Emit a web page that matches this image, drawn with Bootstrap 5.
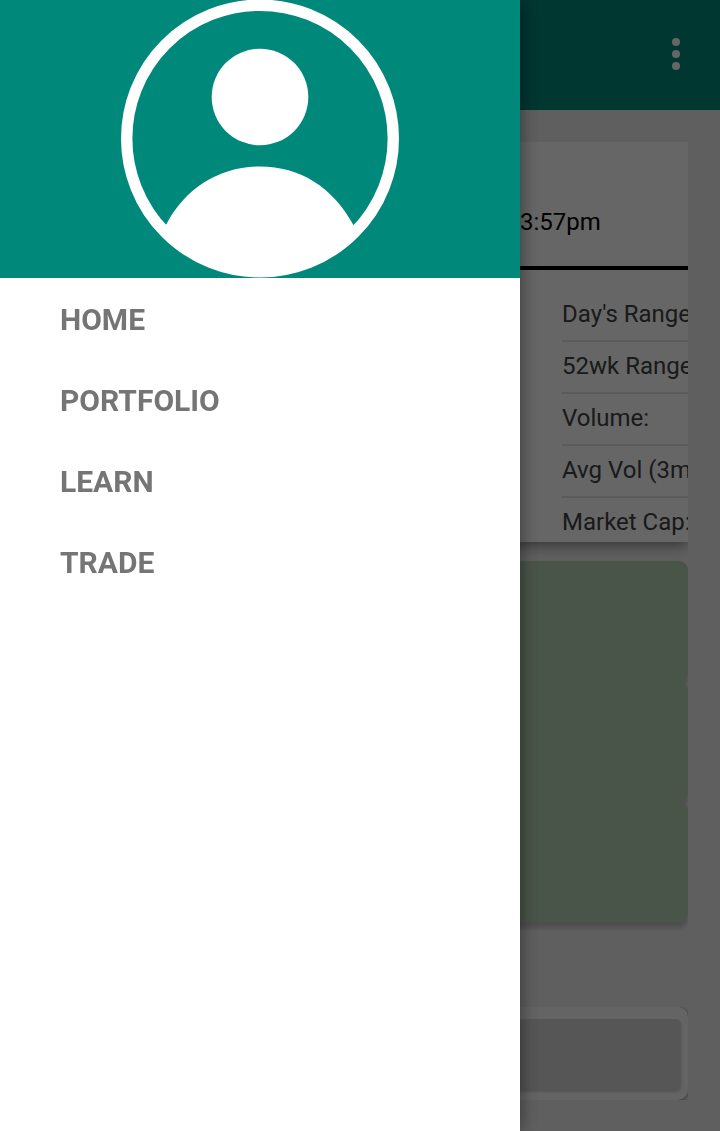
<!DOCTYPE html>
<html lang="en">
<head>
<meta charset="utf-8">
<meta name="viewport" content="width=device-width, initial-scale=1">
<title>Menu</title>
<link href="https://cdn.jsdelivr.net/npm/bootstrap@5.3.0/dist/css/bootstrap.min.css" rel="stylesheet">
<style>
  body { font-family: Roboto, sans-serif; background: #eee; height: 1131px; overflow: hidden; }
  .app-bar { height: 110px; background: #00897b; padding-right: 40px; }
  .page-body { padding: 32px 32px 0; }
  .quote-panel { height: 400px; background: #fff; }
  .quote-head { height: 128px; border-bottom: 4px solid #000; padding: 60px 0 0 488px; font-size: 24px; line-height: 40px; color: #000; }
  .quote-rows { margin: 20px 0 0 530px; }
  .quote-rows li { height: 52px; border-bottom: 2px solid #e0e0e0; font-size: 24px; line-height: 48px; color: #424242; white-space: nowrap; }
  .shade-clip { overflow: hidden; }
  .quote-clip { height: 419px; }
  .quote-panel { box-shadow: 0 5px 12px -1px rgba(0,0,0,.42); }
  .tile-clip { height: 376px; }
  .tile { height: 121px; border-radius: 9px; background: #b9d4b7; box-shadow: 0 6px 4px rgba(0,0,0,.18); }
  .tile + .tile { margin-top: -1px; }
  .entry-box { height: 93px; margin-top: 70px; }
  .entry-frame { height: 93px; border-radius: 10px; background: #fafafa; padding: 12px 7px 9px; box-shadow: 0 1px 4px rgba(0,0,0,.5); }
  .entry-field { height: 70px; border-radius: 5px; background: #d6d6d6; box-shadow: 0 3px 3px rgba(0,0,0,.16); }
  .offcanvas-backdrop.show { opacity: .6; }
  .offcanvas.drawer { --bs-offcanvas-width: 520px; --bs-offcanvas-border-width: 0; background: #fff; box-shadow: 0 0 18px rgba(0,0,0,.5); }
  .drawer-head { height: 278px; background: #00897b; }
  .drawer-menu { padding-top: 1px; }
  .drawer-menu .nav-link { height: 81px; padding: 0 60px; font-size: 30px; font-weight: 700; line-height: 81px; color: #757575; }
</style>
</head>
<body>
<header class="app-bar d-flex align-items-center justify-content-end">
  <svg width="8" height="32" viewBox="0 0 8 32" fill="#fff" overflow="visible"><circle cx="4" cy="3" r="4"/><circle cx="4" cy="15" r="4"/><circle cx="4" cy="27" r="4"/></svg>
</header>
<main class="page-body">
  <section class="shade-clip quote-clip">
    <div class="quote-panel">
      <div class="shade-clip h-100">
        <div class="quote-head">3:57pm</div>
        <ul class="quote-rows list-unstyled">
          <li>Day's Range:</li>
          <li>52wk Range:</li>
          <li>Volume:</li>
          <li>Avg Vol (3m):</li>
          <li>Market Cap:</li>
        </ul>
      </div>
    </div>
  </section>
  <section class="shade-clip tile-clip">
    <div class="tile"></div>
    <div class="tile"></div>
    <div class="tile"></div>
  </section>
  <section class="shade-clip entry-box">
    <div class="entry-frame"><div class="entry-field"></div></div>
  </section>
</main>
<div class="offcanvas-backdrop show"></div>
<aside class="offcanvas offcanvas-start show drawer" data-bs-backdrop="false">
  <div class="drawer-head d-flex justify-content-center">
    <svg width="278" height="278" viewBox="0 0 278 278">
      <clipPath id="disc"><circle cx="139" cy="138.500" r="138"/></clipPath>
      <circle cx="139" cy="138.500" r="133.300" fill="none" stroke="#fff" stroke-width="11.400"/>
      <circle cx="139" cy="97" r="48.300" fill="#fff"/>
      <path d="M45 225C64 188 99 166.500 139 166.500S212 187 233 226L270 278H0Z" fill="#fff" clip-path="url(#disc)"/>
    </svg>
  </div>
  <nav class="drawer-menu nav flex-column">
    <a class="nav-link" href="#">HOME</a>
    <a class="nav-link" href="#">PORTFOLIO</a>
    <a class="nav-link" href="#">LEARN</a>
    <a class="nav-link" href="#">TRADE</a>
  </nav>
</aside>
<script src="https://cdn.jsdelivr.net/npm/bootstrap@5.3.0/dist/js/bootstrap.bundle.min.js"></script>
</body>
</html>
